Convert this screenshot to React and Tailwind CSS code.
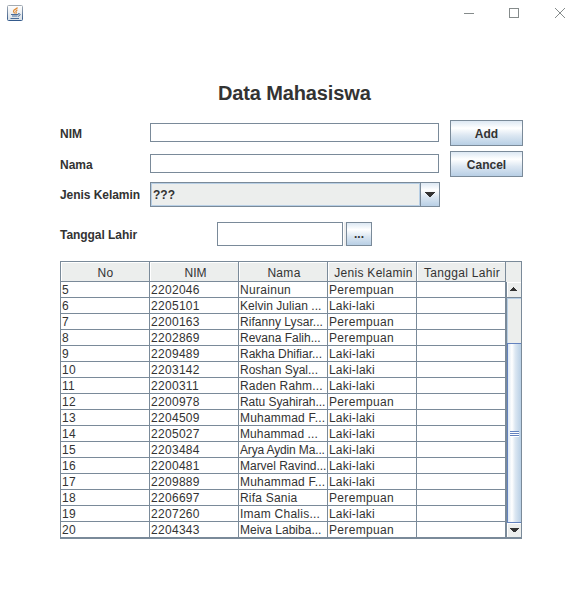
const rows = [
  ['5', '2202046', 'Nurainun', 'P', 'tracking-[0.3px]'],
  ['6', '2205101', 'Kelvin Julian ...', 'L', 'tracking-[0.04px]'],
  ['7', '2200163', 'Rifanny Lysar...', 'P', 'tracking-[0.04px]'],
  ['8', '2202869', 'Revana Falih...', 'P', 'tracking-[0px]'],
  ['9', '2209489', 'Rakha Dhifiar...', 'L', 'tracking-[0px]'],
  ['10', '2203142', 'Roshan Syal...', 'L', 'tracking-[0px]'],
  ['11', '2200311', 'Raden Rahm...', 'L', 'tracking-[0.15px]'],
  ['12', '2200978', 'Ratu Syahirah...', 'P', 'tracking-[-0.05px]'],
  ['13', '2204509', 'Muhammad F...', 'L', 'tracking-[0.2px]'],
  ['14', '2205027', 'Muhammad ...', 'L', 'tracking-[0.1px]'],
  ['15', '2203484', 'Arya Aydin Ma...', 'L', 'tracking-[-0.15px]'],
  ['16', '2200481', 'Marvel Ravind...', 'L', 'tracking-[-0.02px]'],
  ['17', '2209889', 'Muhammad F...', 'L', 'tracking-[0.2px]'],
  ['18', '2206697', 'Rifa Sania', 'P', 'tracking-[0.2px]'],
  ['19', '2207260', 'Imam Chalis...', 'L', 'tracking-[0.25px]'],
  ['20', '2204343', 'Meiva Labiba...', 'P', 'tracking-[0px]'],
];

const headers = [
  ['No', 'tracking-[0.3px] pl-px'],
  ['NIM', 'pl-[3px]'],
  ['Nama', 'tracking-[0.3px] pl-[2px]'],
  ['Jenis Kelamin', 'tracking-[0.3px] pl-[3px]'],
  ['Tanggal Lahir', 'tracking-[0.3px] pl-[2px]'],
];

const cell = 'h-[16px] w-[89px] shrink-0 overflow-hidden whitespace-nowrap border-b border-r border-[#7a8a99] pl-px leading-[17px]';
const steel = 'bg-[linear-gradient(180deg,#dde8f3_0%,#ffffff_30%,#dce7f2_60%,#b8cfe5_100%)]';

function JavaIcon() {
  return (
    <svg width="16" height="16" viewBox="0 0 16 16" className="block">
      <defs>
        <linearGradient id="tile" x1="0" y1="0" x2="0" y2="1">
          <stop offset="0" stopColor="#ffffff" />
          <stop offset="1" stopColor="#d9e0e6" />
        </linearGradient>
        <linearGradient id="edge" x1="0" y1="0" x2="0" y2="1">
          <stop offset="0" stopColor="#a3abb3" />
          <stop offset="1" stopColor="#345a8c" />
        </linearGradient>
      </defs>
      <rect x="0.5" y="0.5" width="15" height="15" rx="1" fill="url(#tile)" stroke="url(#edge)" />
      <path d="M10.5 2.5C10 4 6.5 4.500 6.500 6.200C6.500 7.200 7.500 7.500 7.500 8.500M10.500 5C9 5.500 8.500 6.300 9.200 7.200C9.500 7.700 9 8.300 8.500 8.600" fill="none" stroke="#df8a35" strokeWidth="1.200" />
      <path d="M4 9.500H11.500M5 11H10.500M3.500 13.500H12" fill="none" stroke="#4a6c98" strokeWidth="1.200" />
      <path d="M11 8.700C14 8.200 13.700 10.800 11 11.300" fill="none" stroke="#4a6c98" strokeWidth="1" />
    </svg>
  );
}

function Field({ label }) {
  return (
    <div className="flex">
      <div className="w-[90px] pt-px leading-[21px] h-[19px]">{label}</div>
      <div className="h-[19px] w-[289px] border border-[#7a8a99] bg-white" />
    </div>
  );
}

function Button({ children, className = '' }) {
  return (
    <button className={`block border border-[#7a8a99] font-bold ${steel} ${className}`}>
      {children}
    </button>
  );
}

export default function App() {
  return (
    <div className="h-[590px] w-[581px] overflow-hidden bg-white font-['Liberation_Sans',Arial,sans-serif] text-[12px] text-[#333333]">
      <div className="flex h-[82px] justify-between pl-[7px] pr-[16px] pt-[5px]">
        <JavaIcon />
        <svg width="101" height="10" viewBox="0 0 101 10" className="mt-[3px] block" fill="none" stroke="#858b8b" shapeRendering="crispEdges">
          <path d="M0 5.500H10M45.500 .5H54.500V9.500H45.500Z" />
          <path d="M91 0L101 10M101 0L91 10" shapeRendering="auto" />
        </svg>
      </div>
      <h1 className="pl-[218px] text-[20px] font-bold leading-[22px] tracking-[-0.13px]">Data Mahasiswa</h1>

      <div className="flex gap-[10px] pl-[60px] pt-[16px] font-bold">
        <div className="h-[87px] w-[380px]">
          <div className="pt-[3px]"><Field label="NIM" /></div>
          <div className="pt-[12px]"><Field label="Nama" /></div>
          <div className="flex pt-[9px]">
            <div className="h-[25px] w-[90px] leading-[27px] tracking-[-0.05px]">Jenis Kelamin</div>
            <div className="flex h-[25px] w-[290px] border border-[#7a8a99]">
              <div className="w-[269px] border border-[#b8cfe5] bg-[#eceeed] pl-px leading-[22px]">???</div>
              <div className={`flex w-[19px] justify-center border-l border-[#7a8a99] pt-[9px] ${steel}`}>
                <svg width="10" height="5" viewBox="0 0 10 5" fill="#333" className="block" shapeRendering="crispEdges"><path d="M0 0H10V1H9V2H8V3H7V4H6V5H4V4H3V3H2V2H1V1H0Z" /></svg>
              </div>
            </div>
          </div>
        </div>
        <div className="flex flex-col gap-[5px]">
          <Button className="h-[26px] w-[73px] pt-[2px]">Add</Button>
          <Button className="h-[26px] w-[73px] pt-[2px]">Cancel</Button>
        </div>
      </div>

      <div className="flex pl-[60px] pt-[15px] font-bold">
        <div className="h-[24px] w-[157px] leading-[27px] tracking-[-0.05px]">Tanggal Lahir</div>
        <div className="h-[24px] w-[126px] border border-[#7a8a99]" />
        <div className="ml-px w-[2px] bg-[#eeeeee]" />
        <Button className="h-[24px] w-[26px]">...</Button>
      </div>

      <div className="ml-[60px] mt-[15px] h-[278px] w-[462px] border border-[#7a8a99]">
        <div className="flex h-[20px] bg-[#eceeed]">
          {headers.map(([name, style]) => (
            <div key={name} className="h-[20px] w-[89px] border-b border-r border-[#7a8a99] shadow-[inset_1px_1px_#ffffff]">
              <div className={`whitespace-nowrap text-center leading-[23px] ${style}`}>{name}</div>
            </div>
          ))}
          <div className="w-[15px]" />
        </div>
        <div className="flex h-[256px]">
          <div className="w-[445px]">
            {rows.map(([no, nim, name, gender, spacing]) => (
              <div key={no} className="flex">
                <div className={`${cell} tracking-[0.33px]`}>{no}</div>
                <div className={`${cell} tracking-[0.3px]`}>{nim}</div>
                <div className={`${cell} ${spacing}`}>{name}</div>
                <div className={`${cell} ${gender === 'P' ? 'tracking-[0.33px]' : 'tracking-[0.2px]'}`}>
                  {gender === 'P' ? 'Perempuan' : 'Laki-laki'}
                </div>
                <div className={cell} />
              </div>
            ))}
          </div>
          <div className="flex w-[15px] flex-col border-l border-[#7a8a99] bg-[#eceeed]">
            <div className="flex h-[16px] justify-center border-b border-[#7a8a99] pt-[5px] shadow-[inset_1px_1px_#ffffff]">
              <svg width="8" height="4" viewBox="0 0 8 4" fill="#333" className="block" shapeRendering="crispEdges"><path d="M3 0H4V1H5V2H6V3H7V4H0V3H1V2H2V1H3Z" /></svg>
            </div>
            <div className="h-[45px] border-l border-t border-[#b8cfe5]" />
            <div className="flex h-[180px] items-center justify-center border-b border-l border-t border-[#6382bf] bg-[linear-gradient(90deg,#dde8f3_0%,#ffffff_30%,#dce7f2_55%,#b8cfe5_100%)] pt-[2px]">
              <div className="flex w-[9px] flex-col">
                <div className="h-[2px] border-t border-[#6382bf] bg-white" />
                <div className="h-[2px] border-t border-[#6382bf] bg-white" />
                <div className="h-[2px] border-t border-[#6382bf] bg-white" />
              </div>
            </div>
            <div className="flex h-[15px] justify-center border-b border-[#7a8a99] pt-[5px] shadow-[inset_1px_1px_#ffffff]">
              <svg width="9" height="4" viewBox="0 0 9 4" fill="#333" className="block" shapeRendering="crispEdges"><path d="M0 0H9V1H8V2H7V3H6V4H3V3H2V2H1V1H0Z" /></svg>
            </div>
          </div>
        </div>
      </div>
    </div>
  );
}
